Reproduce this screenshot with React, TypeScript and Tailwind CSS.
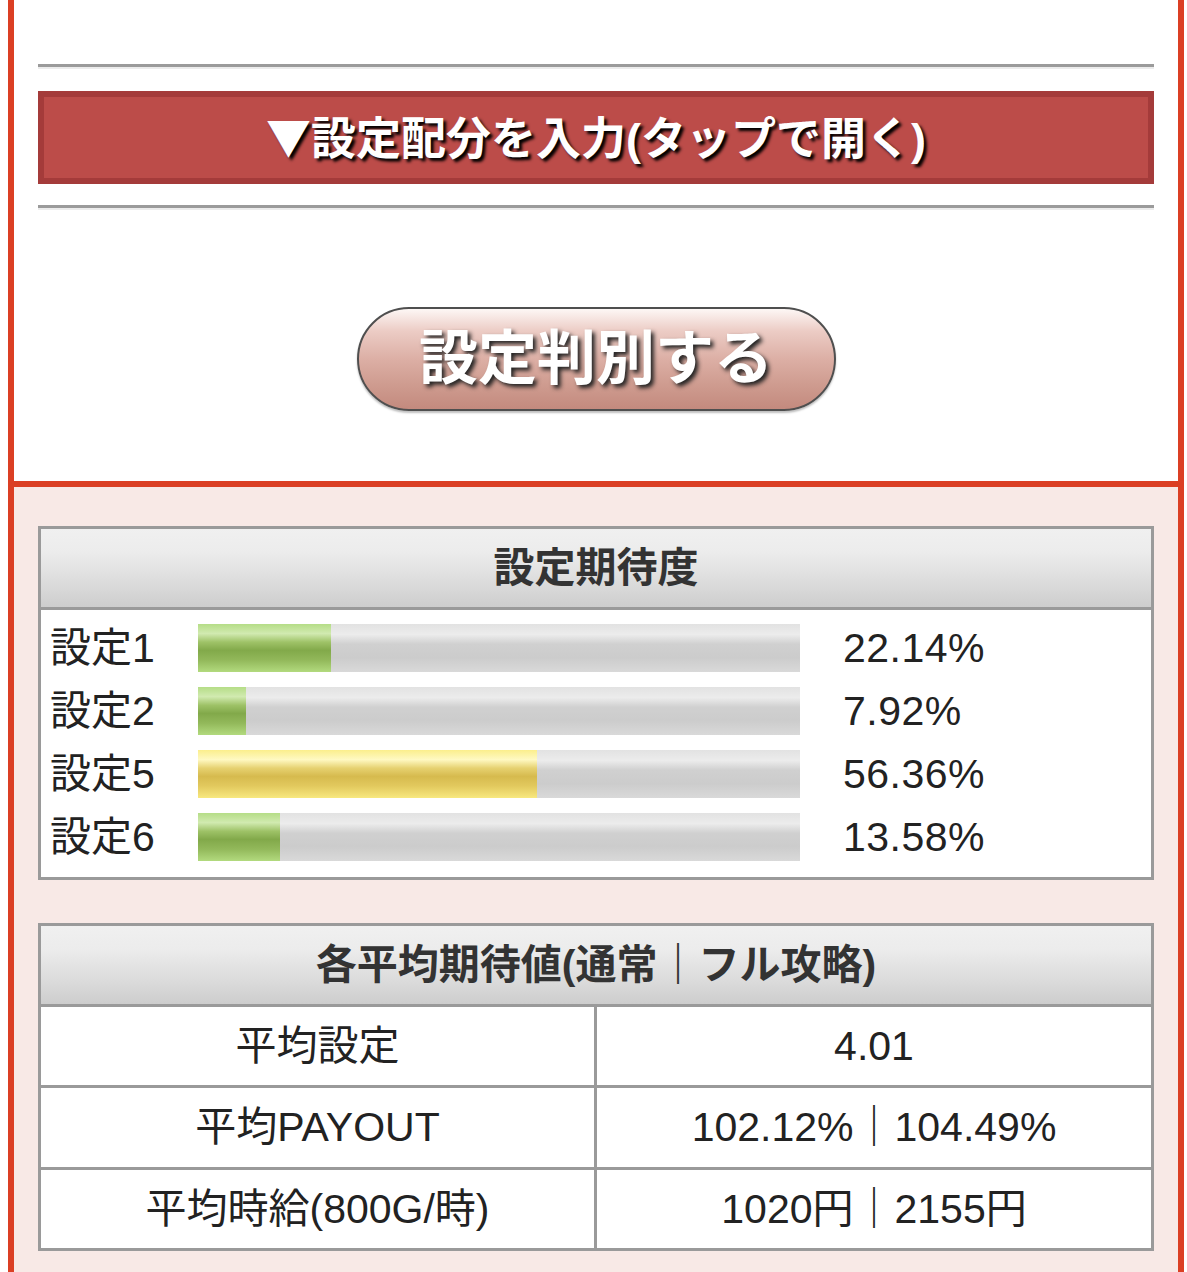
import React from "react";

const FONT = { fontFamily: '"Liberation Sans", "Noto Sans CJK JP", sans-serif' };

const rows = [
  { label: "設定1", value: 22.14, color: "green" },
  { label: "設定2", value: 7.92, color: "green" },
  { label: "設定5", value: 56.36, color: "yellow" },
  { label: "設定6", value: 13.58, color: "green" },
];

function Bar({ value, color }: { value: number; color: string }) {
  return (
    <div className="w-[602px] h-[48px] bg-[linear-gradient(to_bottom,#e2e2e2_0%,#ececec_22%,#d0d0d0_42%,#cccccc_70%,#d9d9d9_100%)]">
      <div
        className={
          color === "yellow"
            ? "h-full bg-[linear-gradient(to_bottom,#fbee8c_0%,#fff9c2_20%,#e6d170_38%,#d6ba4e_55%,#e2c95e_75%,#f8e87f_100%)]"
            : "h-full bg-[linear-gradient(to_bottom,#b5dd87_0%,#d1eab0_20%,#9ec267_38%,#82a94a_55%,#92b85a_75%,#b2da7e_100%)]"
        }
        style={{ width: `${value}%` }}
      />
    </div>
  );
}

function Hr() {
  return <div className="border-t-[3px] border-t-[#9b9b9b] border-b-2 border-b-[#ececec]" />;
}

export default function App() {
  return (
    <div className="bg-white min-h-[1272px] text-[#222]" style={FONT}>
      <div className="ml-[8px] w-[1176px] border-x-[6px] border-[#db3f24]">
        {/* top section */}
        <div className="bg-white px-[24px] pt-[64px] pb-[70px] border-b-[6px] border-[#db3f24]">
          <Hr />
          <div className="mt-[22px] h-[93px] border-[6px] border-[#a43b3a] bg-[#bc4c49] flex items-center justify-center">
            <span className="text-white font-bold text-[45px] leading-none [text-shadow:3px_3px_3px_#000]">
              <span className="font-['Noto_Sans_CJK_JP',sans-serif]">▼</span>設定配分を入力(タップで開く)
            </span>
          </div>
          <div className="mt-[21px]">
            <Hr />
          </div>
          <div className="mt-[97px] flex justify-center">
            <div className="w-[479px] h-[104px] rounded-full border-2 border-[#4f4f4f] bg-[linear-gradient(to_bottom,#fdf7f5_0%,#ecccc5_22%,#dcafa5_50%,#cf9c90_75%,#c38a7e_100%)] shadow-[0_2px_2px_rgba(0,0,0,0.25)] flex items-center justify-center">
              <span className="text-white font-bold text-[59px] leading-none [text-shadow:3px_3px_4px_#222]">
                設定判別する
              </span>
            </div>
          </div>
        </div>

        {/* pink section */}
        <div className="bg-[#f8e9e6] px-[24px] pt-[39px] pb-[40px]">
          {/* table 1 */}
          <div className="border-[3px] border-[#9a9a9a] bg-white">
            <div className="h-[81px] border-b-[3px] border-[#9a9a9a] bg-[linear-gradient(to_bottom,#f0f0f0_0%,#ececec_30%,#d9d9d9_75%,#cdcdcd_100%)] flex items-center justify-center">
              <span className="font-bold text-[41px] leading-none text-[#333]">設定期待度</span>
            </div>
            <div className="pt-[14px] pb-[16px] flex flex-col gap-[15px]">
              {rows.map((r) => (
                <div key={r.label} className="flex items-center h-[48px]">
                  <div className="w-[157px] pl-[9px] text-[41px] leading-none text-[#222]">{r.label}</div>
                  <Bar value={r.value} color={r.color} />
                  <div className="ml-[43px] text-[41px] leading-none text-[#222] tracking-[0.5px]">{r.value.toFixed(2)}%</div>
                </div>
              ))}
            </div>
          </div>

          {/* table 2 */}
          <div className="mt-[43px] border-[3px] border-[#9a9a9a] bg-white">
            <div className="h-[81px] border-b-[3px] border-[#9a9a9a] bg-[linear-gradient(to_bottom,#f0f0f0_0%,#ececec_30%,#d9d9d9_75%,#cdcdcd_100%)] flex items-center justify-center">
              <span className="font-bold text-[41px] leading-none text-[#333]">各平均期待値(通常｜フル攻略)</span>
            </div>
            <div className="flex h-[81px] border-b-[3px] border-[#9a9a9a]">
              <div className="w-[556px] border-r-[3px] border-[#9a9a9a] flex items-center justify-center text-[41px] leading-none">
                平均設定
              </div>
              <div className="flex-1 flex items-center justify-center text-[41px] leading-none">4.01</div>
            </div>
            <div className="flex h-[82px] border-b-[3px] border-[#9a9a9a]">
              <div className="w-[556px] border-r-[3px] border-[#9a9a9a] flex items-center justify-center text-[41px] leading-none">
                平均PAYOUT
              </div>
              <div className="flex-1 flex items-center justify-center text-[41px] leading-none">
                102.12%｜104.49%
              </div>
            </div>
            <div className="flex h-[78px]">
              <div className="w-[556px] border-r-[3px] border-[#9a9a9a] flex items-center justify-center text-[41px] leading-none">
                平均時給(800G/時)
              </div>
              <div className="flex-1 flex items-center justify-center text-[41px] leading-none">
                1020円｜2155円
              </div>
            </div>
          </div>
        </div>
      </div>
    </div>
  );
}
